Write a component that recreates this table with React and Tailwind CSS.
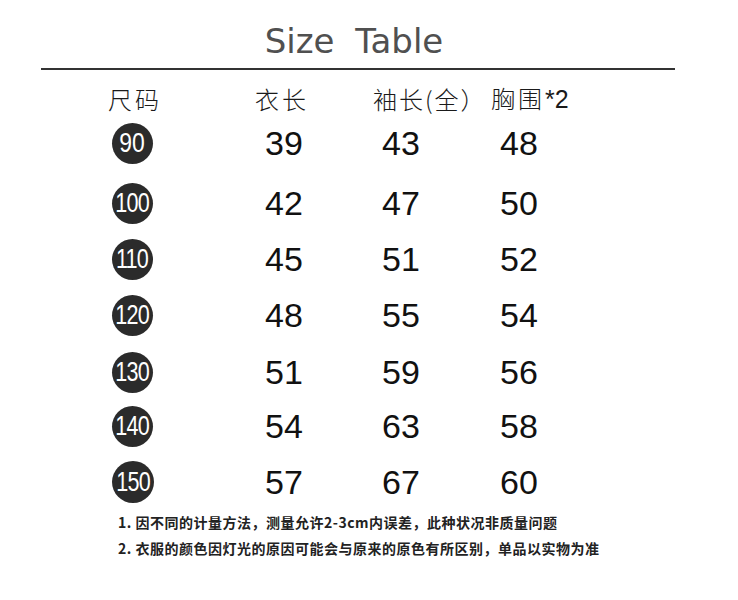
const rows = [
  { size: '90', h: 'h-[60px]', vals: ['39', '43', '48'] },
  { size: '100', h: 'h-[60px]', vals: ['42', '47', '50'] },
  { size: '110', h: 'h-[52px]', vals: ['45', '51', '52'] },
  { size: '120', h: 'h-[60px]', vals: ['48', '55', '54'] },
  { size: '130', h: 'h-[54px]', vals: ['51', '59', '56'] },
  { size: '140', h: 'h-[54px]', vals: ['54', '63', '58'] },
  { size: '150', h: 'h-[58px]', vals: ['57', '67', '60'] },
];

function SizeBadge({ size }) {
  const big = size === '150';
  return (
    <span
      className={
        'flex items-center justify-center rounded-full bg-[#2b2b2b] text-white font-["Liberation_Sans",sans-serif] text-[27px] leading-none ' +
        (big ? 'h-[42px] w-[42px]' : 'h-[41px] w-[41px]')
      }
    >
      <span className={size.length === 3 ? 'scale-x-[0.8] tracking-[-1px]' : 'scale-x-[0.85]'}>{size}</span>
    </span>
  );
}

export default function App() {
  return (
    <div className="h-[600px] w-[738px] bg-white">
      <div className="ml-[41px] w-[634px] pt-[21px]">
        <h1 className="h-[40px] pr-[8px] text-center font-['DejaVu_Sans',sans-serif] text-[34px] leading-[40px] text-[#505050] [word-spacing:10px]">
          Size Table
        </h1>
        <div className="mt-[7px] h-[2px] bg-[#333]" />
      </div>

      <div className="mt-[15px] grid h-[28px] grid-cols-[147px_118px_118px_auto] items-center pl-[108px] font-['Noto_Sans_CJK_SC',sans-serif] text-[24px] font-light leading-none tracking-[3px] text-[#1a1a1a]">
        <span>尺码</span>
        <span>衣长</span>
        <span className="tracking-[2px]">袖长(全）</span>
        <span>
          胸围<span className="font-['Liberation_Sans',sans-serif] text-[25px] font-normal tracking-normal">*2</span>
        </span>
      </div>

      <div className="font-['Liberation_Sans',sans-serif] text-[34px] leading-none text-[#111]">
        {rows.map((r) => (
          <div key={r.size} className={'grid grid-cols-[153px_117px_118px_auto] items-center pl-[112px] ' + r.h}>
            <SizeBadge size={r.size} />
            {r.vals.map((v, i) => (
              <span key={i}>{v}</span>
            ))}
          </div>
        ))}
      </div>

      <div className="-mt-[2px] pl-[118px] font-['Noto_Sans_CJK_SC',sans-serif] text-[14px] font-semibold leading-[26px] tracking-[0.5px] text-[#222]">
        <p>1. 因不同的计量方法，测量允许2-3cm内误差，此种状况非质量问题</p>
        <p>2. 衣服的颜色因灯光的原因可能会与原来的原色有所区别，单品以实物为准</p>
      </div>
    </div>
  );
}
